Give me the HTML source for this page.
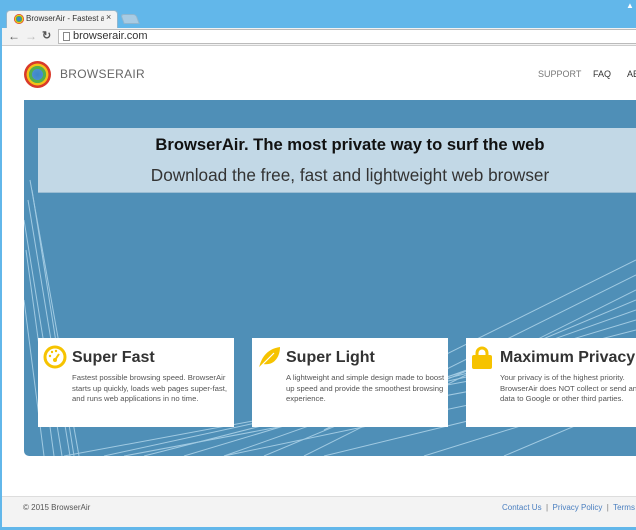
<!DOCTYPE html>
<html><head><meta charset="utf-8"><style>
*{margin:0;padding:0;box-sizing:border-box}
body{width:636px;height:530px;overflow:hidden;background:#62b7ea;font-family:"Liberation Sans",Arial,sans-serif;position:relative}
.abs{position:absolute}
.t{font-size:7.7px;line-height:10.5px;color:#555;width:162px}
</style></head><body>
<!-- tab -->
<div class="abs" style="left:6px;top:10px;width:112px;height:19px;background:#f2f2f2;border:1px solid #8fb6cf;border-bottom:none;border-radius:4px 4px 0 0"></div>
<div class="abs" style="left:122px;top:14px;width:16px;height:10px;background:#a8cbe3;border:1px solid #8fb6cf;border-radius:3px 3px 0 0;transform:skewX(20deg)"></div>
<div class="abs" style="left:14px;top:14px;width:10px;height:10px;border-radius:50%;background:radial-gradient(circle,#3d86c6 30%,#55b04a 31%,#55b04a 45%,#f3c119 46%,#f3c119 60%,#d93a2b 61%)"></div>
<div class="abs" style="left:26px;top:14px;font-size:8px;color:#333;white-space:nowrap;width:78px;overflow:hidden">BrowserAir - Fastest and l</div>
<div class="abs" style="left:106px;top:12px;font-size:9px;color:#444">×</div>
<div class="abs" style="left:626px;top:1px;width:9px;height:9px;font-size:8px;color:#fff">▲</div>
<!-- toolbar -->
<div class="abs" style="left:2px;top:28px;width:634px;height:18px;background:#f2f2f2;border-bottom:1px solid #ccc"></div>
<div class="abs" style="left:8px;top:29px;font-size:12px;color:#555">←</div>
<div class="abs" style="left:25px;top:29px;font-size:12px;color:#bbb">→</div>
<div class="abs" style="left:42px;top:29px;font-size:11px;color:#555;font-weight:bold">↻</div>
<div class="abs" style="left:58px;top:29px;width:580px;height:15px;background:#fff;border:1px solid #bbb"></div>
<div class="abs" style="left:63px;top:32px;width:7px;height:9px;border:1px solid #888"></div>
<div class="abs" style="left:73px;top:30px;font-size:11px;color:#333">browserair.com</div>
<!-- page -->
<div class="abs" style="left:2px;top:46px;width:634px;height:481px;background:#fff"></div>
<div class="abs" style="left:24px;top:61px;width:27px;height:27px;border-radius:50%;background:radial-gradient(circle,#3d86c6 0,#4a8fd0 28%,#55b04a 30%,#55b04a 44%,#f3c119 46%,#f3c119 56%,#d93a2b 58%,#d93a2b 80%,#f5d230 83%)"></div>
<div class="abs" style="left:60px;top:67px;font-size:12px;color:#666;letter-spacing:.3px">BROWSERAIR</div>
<div class="abs" style="left:538px;top:69px;font-size:9px;color:#777">SUPPORT</div>
<div class="abs" style="left:593px;top:69px;font-size:9px;color:#333">FAQ</div>
<div class="abs" style="left:627px;top:69px;font-size:9px;color:#333">AB</div>
<!-- hero -->
<div class="abs" style="left:24px;top:100px;width:612px;height:356px;background:#4f8fb7;border-radius:0 0 0 5px;overflow:hidden">
<svg width="612" height="356" style="position:absolute;left:0;top:0">
<g stroke="#d8f2ff" stroke-width="1" opacity=".6" fill="none">
<line x1="0" y1="120" x2="38" y2="356"/><line x1="4" y1="100" x2="46" y2="356"/><line x1="8" y1="90" x2="50" y2="356"/><line x1="2" y1="150" x2="30" y2="356"/><line x1="6" y1="80" x2="55" y2="356"/><line x1="0" y1="200" x2="20" y2="356"/>
<line x1="612" y1="160" x2="330" y2="300"/><line x1="612" y1="175" x2="300" y2="330"/><line x1="612" y1="190" x2="280" y2="356"/><line x1="612" y1="200" x2="240" y2="356"/><line x1="612" y1="210" x2="200" y2="356"/><line x1="612" y1="220" x2="160" y2="356"/><line x1="612" y1="230" x2="120" y2="356"/><line x1="612" y1="240" x2="80" y2="356"/><line x1="612" y1="250" x2="40" y2="356"/><line x1="612" y1="260" x2="100" y2="356"/><line x1="612" y1="270" x2="200" y2="356"/><line x1="612" y1="280" x2="300" y2="356"/><line x1="612" y1="290" x2="400" y2="356"/><line x1="612" y1="300" x2="480" y2="356"/>
</g></svg>
<div class="abs" style="left:14px;top:28px;width:598px;height:65px;background:#c2d8e6;border-bottom:1px solid #9bbdd3"></div>
<div class="abs" style="left:0;top:35px;width:652px;text-align:center;font-size:16.6px;font-weight:bold;color:#111">BrowserAir. The most private way to surf the web</div>
<div class="abs" style="left:0;top:65px;width:652px;text-align:center;font-size:17.2px;color:#333">Download the free, fast and lightweight web browser</div>
</div>
<!-- cards -->
<div class="abs" style="left:38px;top:338px;width:196px;height:89px;background:#fff"></div>
<svg class="abs" style="left:43px;top:345px" width="24" height="24"><circle cx="12" cy="12" r="10" fill="none" stroke="#f6c300" stroke-width="3"/><circle cx="12" cy="15" r="2" fill="#f6c300"/><line x1="12" y1="15" x2="16" y2="9" stroke="#f6c300" stroke-width="2"/><circle cx="7" cy="11" r="1.2" fill="#f6c300"/><circle cx="9" cy="7" r="1.2" fill="#f6c300"/><circle cx="13" cy="6" r="1.2" fill="#f6c300"/></svg>
<div class="abs" style="left:72px;top:349px;font-size:16px;font-weight:bold;color:#333">Super Fast</div>
<div class="abs t" style="left:72px;top:373px">Fastest possible browsing speed. BrowserAir starts up quickly, loads web pages super-fast, and runs web applications in no time.</div>
<div class="abs" style="left:252px;top:338px;width:196px;height:89px;background:#fff"></div>
<svg class="abs" style="left:256px;top:345px" width="26" height="24"><path d="M3 23 C5 14 10 4 24 2 C24 12 18 21 7 19 Z" fill="#f6c300"/><path d="M3 23 L18 8" stroke="#fff" stroke-width="1.2"/></svg>
<div class="abs" style="left:286px;top:349px;font-size:16px;font-weight:bold;color:#333">Super Light</div>
<div class="abs t" style="left:286px;top:373px">A lightweight and simple design made to boost up speed and provide the smoothest browsing experience.</div>
<div class="abs" style="left:466px;top:338px;width:170px;height:89px;background:#fff"></div>
<svg class="abs" style="left:471px;top:345px" width="22" height="25"><path d="M6 11 V8 a5 5 0 0 1 10 0 V11" fill="none" stroke="#f6c300" stroke-width="3"/><rect x="1" y="10" width="20" height="14" rx="2" fill="#f6c300"/></svg>
<div class="abs" style="left:500px;top:349px;font-size:16px;font-weight:bold;color:#333;white-space:nowrap">Maximum Privacy</div>
<div class="abs t" style="left:500px;top:373px;width:150px">Your privacy is of the highest priority. BrowserAir does NOT collect or send any data to Google or other third parties.</div>
<!-- footer -->
<div class="abs" style="left:2px;top:496px;width:634px;height:31px;background:#f3f3f3;border-top:1px solid #ddd"></div>
<div class="abs" style="left:23px;top:503px;font-size:8px;color:#555">© 2015 BrowserAir</div>
<div class="abs" style="left:502px;top:503px;font-size:8px;color:#4a7fc0;white-space:nowrap">Contact Us <span style="color:#777">&nbsp;|&nbsp;</span> Privacy Policy <span style="color:#777">&nbsp;|&nbsp;</span> Terms</div>
</body></html>
